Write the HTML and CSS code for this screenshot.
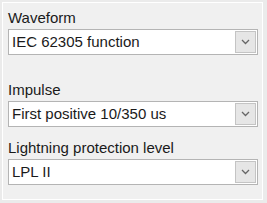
FILE: index.html
```html
<!DOCTYPE html>
<html lang="en">
<head>
<meta charset="UTF-8">
<meta name="viewport" content="width=device-width, initial-scale=1.0">
<title>Lightning settings</title>
<link rel="stylesheet" href="styles.css">
</head>
<body>

<div class="panel">
<div class="field first">
<div class="label">Waveform</div>
<div class="combo">
<span class="value">IEC 62305 function</span>
<span class="drop"><svg width="9" height="6" viewBox="0 0 9 6"><polyline points="1,1 4.5,4.5 8,1" fill="none" stroke="#666" stroke-width="1.3"/></svg></span>
</div>
</div>
<div class="field second">
<div class="label">Impulse</div>
<div class="combo">
<span class="value">First positive 10/350 us</span>
<span class="drop"><svg width="9" height="6" viewBox="0 0 9 6"><polyline points="1,1 4.5,4.5 8,1" fill="none" stroke="#666" stroke-width="1.3"/></svg></span>
</div>
</div>
<div class="field">
<div class="label">Lightning protection level</div>
<div class="combo">
<span class="value">LPL II</span>
<span class="drop"><svg width="9" height="6" viewBox="0 0 9 6"><polyline points="1,1 4.5,4.5 8,1" fill="none" stroke="#666" stroke-width="1.3"/></svg></span>
</div>
</div>
</div>

</body>
</html>
```

FILE: styles.css
```css
body {
margin: 0;
background: #ebebeb;
font-family: "Liberation Sans", Arial, sans-serif;
font-size: 15px;
color: #1a1a1a;
}
.panel {
margin: 2px;
width: 261px;
height: 198px;
box-sizing: border-box;
border: 1px solid #fff;
background: #f0f0f0;
padding: 7px 4px 0 5px;
}
.field.first {
margin-bottom: 27px;
}
.field.second {
margin-bottom: 13px;
}
.label {
height: 16px;
line-height: 16px;
margin-bottom: 3px;
}
.combo {
display: flex;
height: 26px;
box-sizing: border-box;
border: 1px solid #b4b4b4;
background: #fff;
padding: 1px;
}
.value {
flex: 1;
line-height: 22px;
padding-left: 2px;
}
.drop {
width: 21px;
box-sizing: border-box;
border: 1px solid #c4c4c4;
background: #e6e6e6;
display: flex;
align-items: center;
justify-content: center;
}
```
